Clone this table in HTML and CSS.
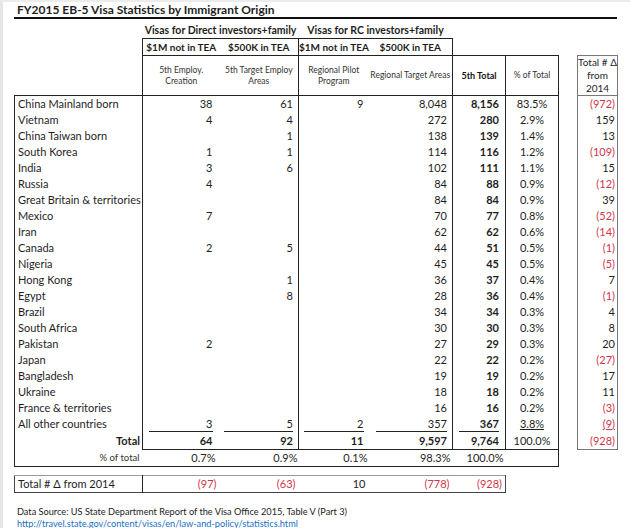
FILE: index.html
```html
<!DOCTYPE html>
<html>
<head>
<meta charset="utf-8">
<link rel="stylesheet" href="styles.css">
</head>
<body>
<div class="sheet">
  <div class="title">FY2015 EB-5 Visa Statistics by Immigrant Origin</div>
  <table class="grid">
    <colgroup>
      <col class="w-label"><col class="w-c1"><col class="w-c2"><col class="w-c3"><col class="w-c4"><col class="w-tot"><col class="w-pct"><col class="w-gap"><col class="w-delta">
    </colgroup>
    <tr class="r-group">
      <td></td>
      <td colspan="2" class="group">Visas for Direct investors+family</td>
      <td colspan="2" class="group">Visas for RC investors+family</td>
      <td></td><td></td><td></td><td></td>
    </tr>
    <tr class="r-sub">
      <td></td>
      <td class="sub bt bl">$1M not in TEA</td>
      <td class="sub bt br">$500K in TEA</td>
      <td class="sub bt">$1M not in TEA</td>
      <td class="sub bt br">$500K in TEA</td>
      <td></td><td></td><td></td><td></td>
    </tr>
    <tr class="r-desc">
      <td></td>
      <td class="desc bt bl">5th Employ.<br>Creation</td>
      <td class="desc bt br">5th Target Employ<br>Areas</td>
      <td class="desc bt">Regional Pilot<br>Program</td>
      <td class="desc bt br">Regional Target Areas</td>
      <td class="desc bold bt br">5th Total</td>
      <td class="desc bt br">% of Total</td>
      <td></td>
      <td class="dhead box">Total # Δ<br>from<br>2014</td>
    </tr>
    <tr class="row first"><td class="lab">China Mainland born</td><td class="n1">38</td><td class="n2">61</td><td class="n3">9</td><td class="n4">8,048</td><td class="nt">8,156</td><td class="np">83.5%</td><td></td><td class="nd neg">(972)</td></tr>
    <tr class="row"><td class="lab">Vietnam</td><td class="n1">4</td><td class="n2">4</td><td class="n3"></td><td class="n4">272</td><td class="nt">280</td><td class="np">2.9%</td><td></td><td class="nd">159</td></tr>
    <tr class="row"><td class="lab">China Taiwan born</td><td class="n1"></td><td class="n2">1</td><td class="n3"></td><td class="n4">138</td><td class="nt">139</td><td class="np">1.4%</td><td></td><td class="nd">13</td></tr>
    <tr class="row"><td class="lab">South Korea</td><td class="n1">1</td><td class="n2">1</td><td class="n3"></td><td class="n4">114</td><td class="nt">116</td><td class="np">1.2%</td><td></td><td class="nd neg">(109)</td></tr>
    <tr class="row"><td class="lab">India</td><td class="n1">3</td><td class="n2">6</td><td class="n3"></td><td class="n4">102</td><td class="nt">111</td><td class="np">1.1%</td><td></td><td class="nd">15</td></tr>
    <tr class="row"><td class="lab">Russia</td><td class="n1">4</td><td class="n2"></td><td class="n3"></td><td class="n4">84</td><td class="nt">88</td><td class="np">0.9%</td><td></td><td class="nd neg">(12)</td></tr>
    <tr class="row"><td class="lab">Great Britain &amp; territories</td><td class="n1"></td><td class="n2"></td><td class="n3"></td><td class="n4">84</td><td class="nt">84</td><td class="np">0.9%</td><td></td><td class="nd">39</td></tr>
    <tr class="row"><td class="lab">Mexico</td><td class="n1">7</td><td class="n2"></td><td class="n3"></td><td class="n4">70</td><td class="nt">77</td><td class="np">0.8%</td><td></td><td class="nd neg">(52)</td></tr>
    <tr class="row"><td class="lab">Iran</td><td class="n1"></td><td class="n2"></td><td class="n3"></td><td class="n4">62</td><td class="nt">62</td><td class="np">0.6%</td><td></td><td class="nd neg">(14)</td></tr>
    <tr class="row"><td class="lab">Canada</td><td class="n1">2</td><td class="n2">5</td><td class="n3"></td><td class="n4">44</td><td class="nt">51</td><td class="np">0.5%</td><td></td><td class="nd neg">(1)</td></tr>
    <tr class="row"><td class="lab">Nigeria</td><td class="n1"></td><td class="n2"></td><td class="n3"></td><td class="n4">45</td><td class="nt">45</td><td class="np">0.5%</td><td></td><td class="nd neg">(5)</td></tr>
    <tr class="row"><td class="lab">Hong Kong</td><td class="n1"></td><td class="n2">1</td><td class="n3"></td><td class="n4">36</td><td class="nt">37</td><td class="np">0.4%</td><td></td><td class="nd">7</td></tr>
    <tr class="row"><td class="lab">Egypt</td><td class="n1"></td><td class="n2">8</td><td class="n3"></td><td class="n4">28</td><td class="nt">36</td><td class="np">0.4%</td><td></td><td class="nd neg">(1)</td></tr>
    <tr class="row"><td class="lab">Brazil</td><td class="n1"></td><td class="n2"></td><td class="n3"></td><td class="n4">34</td><td class="nt">34</td><td class="np">0.3%</td><td></td><td class="nd">4</td></tr>
    <tr class="row"><td class="lab">South Africa</td><td class="n1"></td><td class="n2"></td><td class="n3"></td><td class="n4">30</td><td class="nt">30</td><td class="np">0.3%</td><td></td><td class="nd">8</td></tr>
    <tr class="row"><td class="lab">Pakistan</td><td class="n1">2</td><td class="n2"></td><td class="n3"></td><td class="n4">27</td><td class="nt">29</td><td class="np">0.3%</td><td></td><td class="nd">20</td></tr>
    <tr class="row"><td class="lab">Japan</td><td class="n1"></td><td class="n2"></td><td class="n3"></td><td class="n4">22</td><td class="nt">22</td><td class="np">0.2%</td><td></td><td class="nd neg">(27)</td></tr>
    <tr class="row"><td class="lab">Bangladesh</td><td class="n1"></td><td class="n2"></td><td class="n3"></td><td class="n4">19</td><td class="nt">19</td><td class="np">0.2%</td><td></td><td class="nd">17</td></tr>
    <tr class="row"><td class="lab">Ukraine</td><td class="n1"></td><td class="n2"></td><td class="n3"></td><td class="n4">18</td><td class="nt">18</td><td class="np">0.2%</td><td></td><td class="nd">11</td></tr>
    <tr class="row"><td class="lab">France &amp; territories</td><td class="n1"></td><td class="n2"></td><td class="n3"></td><td class="n4">16</td><td class="nt">16</td><td class="np">0.2%</td><td></td><td class="nd neg">(3)</td></tr>
    <tr class="row last"><td class="lab">All other countries</td><td class="n1"><div class="ul">3</div></td><td class="n2"><div class="ul">5</div></td><td class="n3"><div class="ul">2</div></td><td class="n4"><div class="ul">357</div></td><td class="nt"><div class="ul">367</div></td><td class="np"><u>3.8%</u></td><td></td><td class="nd neg"><u>(9)</u></td></tr>
    <tr class="row total"><td class="lab tlab">Total</td><td class="n1">64</td><td class="n2">92</td><td class="n3">11</td><td class="n4">9,597</td><td class="nt">9,764</td><td class="np">100.0%</td><td></td><td class="nd neg">(928)</td></tr>
    <tr class="row pctrow"><td class="lab plab">% of total</td><td class="p1">0.7%</td><td class="p2">0.9%</td><td class="p3">0.1%</td><td class="p4">98.3%</td><td class="p5">100.0%</td><td class="p6"></td><td></td><td></td></tr>
  </table>

  <table class="delta">
    <colgroup>
      <col class="w-label"><col class="w-c1"><col class="w-c2"><col class="w-c3"><col class="w-c4"><col class="w-tot">
    </colgroup>
    <tr>
      <td class="dl">Total # Δ from 2014</td>
      <td class="dv neg">(97)</td>
      <td class="dv neg">(63)</td>
      <td class="dv">10</td>
      <td class="dv neg">(778)</td>
      <td class="dv neg">(928)</td>
    </tr>
  </table>

  <div class="source">
    <div>Data Source: US State Department Report of the Visa Office 2015, Table V (Part 3)</div>
    <a class="link" href="#">http://travel.state.gov/content/visas/en/law-and-policy/statistics.html</a>
  </div>
</div>
</body>
</html>
```

FILE: styles.css
```css
html, body {
  margin: 0;
  padding: 0;
  background: #ffffff;
}
body {
  font-family: Lato, "Open Sans", "Liberation Sans", sans-serif;
  color: #1e1e1e;
  border-left: 3px solid #e6e6e6;
  border-top: 2px solid #ececec;
  height: 528px;
  box-sizing: border-box;
}
.sheet {
  padding-left: 11px;
  width: 603px;
}
.title {
  font-weight: bold;
  font-size: 12px;
  height: 15px;
  line-height: 15px;
  padding-left: 3px;
  border-bottom: 2px solid #111;
}
table {
  border-collapse: collapse;
  table-layout: fixed;
}
.grid { width: 603px; }
.w-label { width: 128px; }
.w-c1 { width: 77px; }
.w-c2 { width: 79px; }
.w-c3 { width: 70px; }
.w-c4 { width: 84px; }
.w-tot { width: 53px; }
.w-pct { width: 53px; }
.w-gap { width: 19px; }
.w-delta { width: 40px; }
td {
  padding: 0;
  white-space: nowrap;
  overflow: visible;
}
.bt { border-top: 1px solid #222; }
.bl { border-left: 1px solid #222; }
.br { border-right: 1px solid #222; }
.r-group td { height: 19px; }
.group {
  font-weight: bold;
  font-size: 10.5px;
  text-align: center;
  vertical-align: bottom;
  line-height: 15px;
}
.r-sub td { height: 16px; }
.sub {
  font-weight: bold;
  font-size: 10px;
  text-align: center;
  line-height: 15px;
}
.r-desc td { height: 39px; }
.desc {
  font-size: 8.5px;
  line-height: 11px;
  text-align: center;
  color: #333;
}
.desc.bold { font-weight: bold; font-size: 9px; color: #111; }
.dhead {
  font-size: 10px;
  line-height: 13px;
  text-align: center;
}
.box {
  border: 1px solid #777;
}
.row td {
  height: 16px;
  line-height: 16px;
  font-size: 11px;
}
.row.first td { border-top: 1px solid #222; }
.row.first td:nth-child(8) { border-top: none; }
.lab {
  border-left: 1px solid #222;
  padding-left: 3px !important;
}
.n1, .n2, .n3, .n4, .nt, .nd { text-align: right; }
.n1 { border-left: 1px solid #222; padding: 0 7px 0 6px !important; }
.n2 { border-right: 1px solid #222; padding: 0 5px 0 4px !important; }
.n3 { padding: 0 5px 0 5px !important; }
.n4 { border-right: 1px solid #222; padding: 0 5px 0 7px !important; }
.nt { border-right: 1px solid #222; padding: 0 6px 0 6px !important; font-weight: bold; }
.np { border-right: 1px solid #222; text-align: center; }
.nd {
  border-left: 1px solid #777;
  border-right: 1px solid #777;
  padding-right: 2px !important;
}
.neg { color: #d2354a; }
.ul {
  border-bottom: 1px solid #222;
  line-height: 15px;
}
.total td { height: 17px; font-weight: bold; }
.total .np { font-weight: normal; }
.total .nd { font-weight: normal; border-bottom: 1px solid #777; }
.total .n1, .total .n2, .total .n3, .total .n4, .total .nt, .total .np { border-bottom: 1px solid #222; }
.tlab { text-align: right; padding-right: 2px !important; }
.pctrow td { height: 16px; }
.pctrow .lab { border-bottom: 1px solid #222; }
.plab {
  text-align: right;
  font-size: 9.5px !important;
  padding-right: 3px !important;
  color: #333;
}
.p1, .p2, .p3, .p4, .p5 {
  text-align: right;
  padding-right: 3px !important;
  border-bottom: 1px solid #222;
}
.p1 { padding-right: 4px !important; }
.p2 { padding-right: 1px !important; }
.p3 { padding-right: 1px !important; }
.p4 { padding-right: 2px !important; }
.p5 { padding-right: 2px !important; }
.p6 { border-bottom: 1px solid #222; border-right: 1px solid #222; }

.delta {
  width: 491px;
  margin-top: 8px;
  border: 1px solid #444;
  border-top-color: #999;
}
.delta td {
  height: 16px;
  line-height: 16px;
  font-size: 11px;
}
.dl {
  padding-left: 3px !important;
  border-right: 1px solid #222;
}
.dv {
  text-align: right;
  padding-right: 3px !important;
}
.source {
  margin-top: 13px;
  padding-left: 3px;
  font-size: 9.2px;
  line-height: 12px;
  color: #222;
}
.link {
  color: #1a6fc4;
  text-decoration: underline;
}
```
